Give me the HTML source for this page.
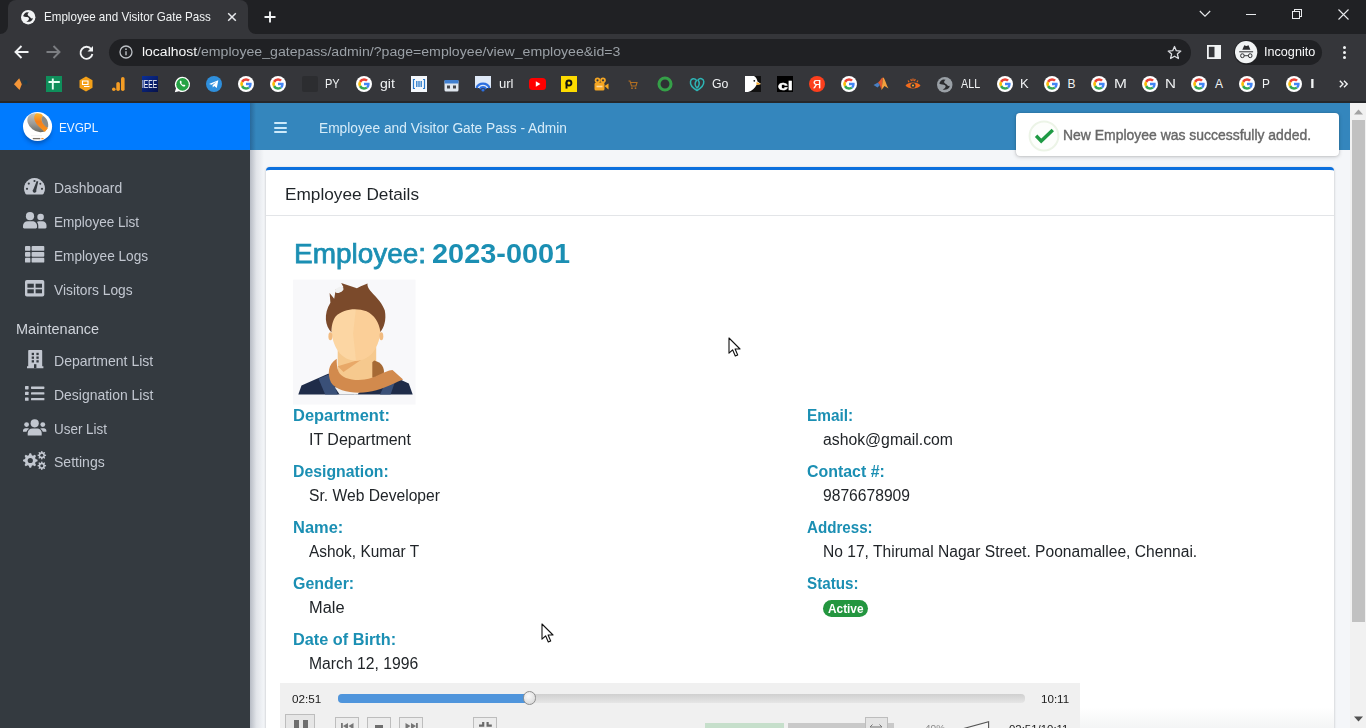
<!DOCTYPE html>
<html lang="en"><head><meta charset="utf-8"><title>Employee and Visitor Gate Pass</title>
<style>
html,body{margin:0;padding:0}
body{width:1366px;height:728px;overflow:hidden;position:relative;background:#f4f6f9;font-family:"Liberation Sans",sans-serif}
.b{position:absolute;display:block;overflow:visible}
.t{position:absolute;white-space:nowrap;transform-origin:0 0;display:block}
</style></head>
<body>
<aside>
<div class="b" style="left:0.00px;top:102.50px;width:250.00px;height:626.00px;background:#343a40;"></div>
<div class="b" style="left:0.00px;top:102.50px;width:250.00px;height:47.50px;background:#007bff;"></div>
<svg class="b" style="left:19.90px;top:108.90px;" width="35" height="38" viewBox="0 0 35 38"><defs><linearGradient id="sg" x1="0" y1="0" x2="1" y2="1"><stop offset="0" stop-color="#d2d2d0"/><stop offset=".55" stop-color="#9a9a96"/><stop offset="1" stop-color="#55554f"/></linearGradient><linearGradient id="og" x1="0" y1="0" x2="0" y2="1"><stop offset="0" stop-color="#fbb731"/><stop offset=".45" stop-color="#f7801a"/><stop offset="1" stop-color="#f7941e"/></linearGradient><filter id="ls" x="-40%" y="-40%" width="180%" height="190%"><feGaussianBlur stdDeviation="2"/></filter></defs><ellipse cx="17.500" cy="22" rx="13.500" ry="12.500" fill="#002f75" opacity=".5" filter="url(#ls)"/><circle cx="17.550" cy="17.550" r="14.550" fill="#fff"/><ellipse cx="17.500" cy="13.800" rx="11.200" ry="8.200" transform="rotate(38 17.500 13.800)" fill="url(#sg)"/><path d="M15.96 4.58 C12.17 8.37 14.06 14.69 24.81 22.91 L27.97 19.12 C22.28 15.33 19.75 10.90 22.91 6.48 C21.65 4.58 18.49 3.95 15.96 4.58 z" fill="url(#og)"/><path d="M22.91 6.79 C20.38 10.90 22.28 14.69 27.97 18.80 C28.92 14.06 27.02 9.01 22.91 6.79 z" fill="#8b8b87"/><path d="M12.800 29.600H20.300" stroke="#77706a" stroke-width="1.300"/><path d="M21.300 29.600H23.600" stroke="#f0923a" stroke-width="1.300"/><path d="M11 26.700H22" stroke="#e9e9e9" stroke-width=".600"/></svg>
<span class="t" style="left:59.33px;top:120.60px;font-size:13.70px;line-height:13.70px;color:#fff;font-weight:400;transform:scaleX(0.8591);opacity:.92;">EVGPL</span>
<span class="t" style="left:53.80px;top:180.80px;font-size:14.30px;line-height:14.30px;color:#c2c7d0;font-weight:400;transform:scaleX(0.9754);">Dashboard</span>
<span class="t" style="left:53.80px;top:215.00px;font-size:14.30px;line-height:14.30px;color:#c2c7d0;font-weight:400;transform:scaleX(0.9471);">Employee List</span>
<span class="t" style="left:53.80px;top:249.00px;font-size:14.30px;line-height:14.30px;color:#c2c7d0;font-weight:400;transform:scaleX(0.9551);">Employee Logs</span>
<span class="t" style="left:53.80px;top:283.00px;font-size:14.30px;line-height:14.30px;color:#c2c7d0;font-weight:400;transform:scaleX(0.9642);">Visitors Logs</span>
<span class="t" style="left:15.53px;top:321.70px;font-size:14.30px;line-height:14.30px;color:#d0d4db;font-weight:400;transform:scaleX(1.0150);">Maintenance</span>
<span class="t" style="left:53.80px;top:353.90px;font-size:14.30px;line-height:14.30px;color:#c2c7d0;font-weight:400;transform:scaleX(0.9836);">Department List</span>
<span class="t" style="left:53.80px;top:387.80px;font-size:14.30px;line-height:14.30px;color:#c2c7d0;font-weight:400;transform:scaleX(0.9764);">Designation List</span>
<span class="t" style="left:53.80px;top:421.60px;font-size:14.30px;line-height:14.30px;color:#c2c7d0;font-weight:400;transform:scaleX(0.9404);">User List</span>
<span class="t" style="left:53.80px;top:454.80px;font-size:14.30px;line-height:14.30px;color:#c2c7d0;font-weight:400;transform:scaleX(0.9824);">Settings</span>
<svg class="b" style="left:24.00px;top:178.00px;" width="21" height="16.5" viewBox="0 0 21 16.5"><path d="M10.500 0A10.500 10.500 0 0 0 1.400 15.700c.300.500.800.800 1.300.800H18.300c.500 0 1-.300 1.300-.800A10.500 10.500 0 0 0 10.500 0z" fill="#c2c7d0"/><g fill="#343a40"><circle cx="10.500" cy="3" r="1.100"/><circle cx="4.800" cy="5.600" r="1.100"/><circle cx="3" cy="10.800" r="1.100"/><circle cx="18" cy="10.800" r="1.100"/><circle cx="16.300" cy="5.700" r="1"/><path d="M12.700 3L9.400 11.200A1.900 1.900 0 1 0 12.300 12L14.300 3.600z"/></g></svg>
<svg class="b" style="left:23.00px;top:212.00px;" width="23.5" height="16.5" viewBox="0 0 23.5 16.5"><circle cx="7" cy="4.200" r="4.100" fill="#c2c7d0"/><path d="M1.200 16.400C.500 16.400 0 15.900 0 15.200V13.800C0 11.200 2.100 9.300 4.700 9.300H9.300C11.900 9.300 14 11.200 14 13.800V15.200C14 15.900 13.500 16.400 12.800 16.400z" fill="#c2c7d0"/><circle cx="17.600" cy="5" r="3.300" fill="#c2c7d0"/><path d="M15.300 16.400V13.800C15.300 12.200 14.800 10.900 13.900 9.900 14.500 9.500 15.300 9.300 16 9.300H19.400C21.700 9.300 23.500 11 23.500 13.300V15.300C23.500 15.900 23 16.400 22.400 16.400z" fill="#c2c7d0"/></svg>
<svg class="b" style="left:25.00px;top:245.80px;" width="19.4" height="16.8" viewBox="0 0 19.4 16.8"><rect x="0" y="0.00" width="5.400" height="4.800" rx=".900" fill="#c2c7d0"/><rect x="6.600" y="0.00" width="12.700" height="4.800" rx=".900" fill="#c2c7d0"/><rect x="0" y="5.90" width="5.400" height="4.800" rx=".900" fill="#c2c7d0"/><rect x="6.600" y="5.90" width="12.700" height="4.800" rx=".900" fill="#c2c7d0"/><rect x="0" y="11.80" width="5.400" height="4.800" rx=".900" fill="#c2c7d0"/><rect x="6.600" y="11.80" width="12.700" height="4.800" rx=".900" fill="#c2c7d0"/></svg>
<svg class="b" style="left:25.00px;top:280.00px;" width="19.4" height="16.8" viewBox="0 0 19.4 16.8"><rect x="0" y="0" width="19.300" height="16.600" rx="1.800" fill="#c2c7d0"/><g fill="#343a40"><rect x="2.400" y="3.700" width="6.400" height="4"/><rect x="10.600" y="3.700" width="6.400" height="4"/><rect x="2.400" y="9.300" width="6.400" height="4"/><rect x="10.600" y="9.300" width="6.400" height="4"/></g></svg>
<svg class="b" style="left:26.80px;top:349.70px;" width="16.5" height="18.3" viewBox="0 0 16.5 18.3"><path d="M2.200 0H14.200C14.800 0 15.200.400 15.200 1V16.300H16.400V18.200H0V16.300H1.200V1C1.200.400 1.600 0 2.200 0z" fill="#c2c7d0"/><g fill="#343a40"><rect x="4.70" y="2.80" width="2.300" height="2.300"/><rect x="9.40" y="2.80" width="2.300" height="2.300"/><rect x="4.70" y="6.50" width="2.300" height="2.300"/><rect x="9.40" y="6.50" width="2.300" height="2.300"/><rect x="4.70" y="10.20" width="2.300" height="2.300"/><rect x="9.40" y="10.20" width="2.300" height="2.300"/><rect x="7" y="14.200" width="2.400" height="4"/></g></svg>
<svg class="b" style="left:25.00px;top:386.00px;" width="19.5" height="15" viewBox="0 0 19.5 15"><rect x="0" y="0.00" width="3.600" height="3.400" rx=".600" fill="#c2c7d0"/><rect x="6" y="0.50" width="13.400" height="2.400" rx=".600" fill="#c2c7d0"/><rect x="0" y="5.70" width="3.600" height="3.400" rx=".600" fill="#c2c7d0"/><rect x="6" y="6.20" width="13.400" height="2.400" rx=".600" fill="#c2c7d0"/><rect x="0" y="11.40" width="3.600" height="3.400" rx=".600" fill="#c2c7d0"/><rect x="6" y="11.90" width="13.400" height="2.400" rx=".600" fill="#c2c7d0"/></svg>
<svg class="b" style="left:22.90px;top:419.00px;" width="23.4" height="16.5" viewBox="0 0 23.4 16.5"><circle cx="11.700" cy="4.300" r="4.100" fill="#c2c7d0"/><path d="M4.700 16.400V14.200C4.700 11.500 6.800 9.600 9.400 9.600H14C16.600 9.600 18.700 11.500 18.700 14.200V16.400z" fill="#c2c7d0"/><circle cx="3.600" cy="5.600" r="2.400" fill="#c2c7d0"/><circle cx="19.800" cy="5.600" r="2.400" fill="#c2c7d0"/><path d="M0 12.800V11.600C0 10.200 1.100 9.200 2.400 9.200H4.700C5.300 9.200 5.800 9.400 6.200 9.700 4.700 10.600 3.700 12 3.500 12.800z" fill="#c2c7d0"/><path d="M23.400 12.800V11.600C23.400 10.200 22.300 9.200 21 9.200H18.700C18.100 9.200 17.600 9.400 17.200 9.700 18.700 10.600 19.700 12 19.900 12.800z" fill="#c2c7d0"/></svg>
<svg class="b" style="left:22.90px;top:450.80px;" width="23.6" height="19" viewBox="0 0 23.6 19"><path d="M14.56 8.70L14.56 10.30L12.58 11.03L12.12 12.15L13.00 14.06L11.86 15.20L9.95 14.32L8.83 14.78L8.10 16.76L6.50 16.76L5.77 14.78L4.65 14.32L2.74 15.20L1.60 14.06L2.48 12.15L2.02 11.03L0.04 10.30L0.04 8.70L2.02 7.97L2.48 6.85L1.60 4.94L2.74 3.80L4.65 4.68L5.77 4.22L6.50 2.24L8.10 2.24L8.83 4.22L9.95 4.68L11.86 3.80L13.00 4.94L12.12 6.85L12.58 7.97z" fill="#c2c7d0"/><circle cx="7.30" cy="9.50" r="2.60" fill="#343a40"/><path d="M23.07 3.83L23.07 4.77L21.78 5.16L21.52 5.79L22.16 6.99L21.49 7.66L20.29 7.02L19.66 7.28L19.27 8.57L18.33 8.57L17.94 7.28L17.31 7.02L16.11 7.66L15.44 6.99L16.08 5.79L15.82 5.16L14.53 4.77L14.53 3.83L15.82 3.44L16.08 2.81L15.44 1.61L16.11 0.94L17.31 1.58L17.94 1.32L18.33 0.03L19.27 0.03L19.66 1.32L20.29 1.58L21.49 0.94L22.16 1.61L21.52 2.81L21.78 3.44z" fill="#c2c7d0"/><circle cx="18.80" cy="4.30" r="1.50" fill="#343a40"/><path d="M23.07 14.23L23.07 15.17L21.78 15.56L21.52 16.19L22.16 17.39L21.49 18.06L20.29 17.42L19.66 17.68L19.27 18.97L18.33 18.97L17.94 17.68L17.31 17.42L16.11 18.06L15.44 17.39L16.08 16.19L15.82 15.56L14.53 15.17L14.53 14.23L15.82 13.84L16.08 13.21L15.44 12.01L16.11 11.34L17.31 11.98L17.94 11.72L18.33 10.43L19.27 10.43L19.66 11.72L20.29 11.98L21.49 11.34L22.16 12.01L21.52 13.21L21.78 13.84z" fill="#c2c7d0"/><circle cx="18.80" cy="14.70" r="1.50" fill="#343a40"/></svg>
</aside>
<main>
<div class="b" style="left:250.00px;top:102.50px;width:1099.50px;height:626.00px;background:#f4f6f9;"></div>
<div class="b" style="left:250.00px;top:150.00px;width:14.00px;height:578.00px;background:linear-gradient(90deg,rgba(60,70,90,.33),rgba(60,70,90,.10) 45%,rgba(60,70,90,0));"></div>
<div class="b" style="left:250.00px;top:102.50px;width:1099.50px;height:47.30px;background:#3486bd;"></div>
<div class="b" style="left:250.00px;top:102.50px;width:6.00px;height:47.30px;background:linear-gradient(90deg,rgba(20,50,90,.35),rgba(20,50,90,0));"></div>
<div class="b" style="left:274.00px;top:122.10px;width:13.00px;height:2.30px;background:#cdeafb;border-radius:1px;"></div>
<div class="b" style="left:274.00px;top:126.65px;width:13.00px;height:2.30px;background:#cdeafb;border-radius:1px;"></div>
<div class="b" style="left:274.00px;top:131.20px;width:13.00px;height:2.30px;background:#cdeafb;border-radius:1px;"></div>
<span class="t" style="left:318.67px;top:121.35px;font-size:14.00px;line-height:14.00px;color:#d6ecf9;font-weight:400;transform:scaleX(0.9816);">Employee and Visitor Gate Pass - Admin</span>
<div class="b" style="left:266.00px;top:167.00px;width:1068.00px;height:570.00px;background:#fff;border-top:3px solid #0b70de;border-radius:4px 4px 0 0;box-shadow:0 0 1px rgba(0,0,0,.125),0 1px 3px rgba(0,0,0,.2);"></div>
<div class="b" style="left:266.00px;top:214.50px;width:1068.00px;height:1.00px;background:#e3e5e8;"></div>
<span class="t" style="left:285.41px;top:185.67px;font-size:17.40px;line-height:17.40px;color:#1f2428;font-weight:400;transform:scaleX(0.9906);">Employee Details</span>
<span class="t" style="left:293.87px;top:240.24px;font-size:27.60px;line-height:27.60px;color:#1b8fb3;font-weight:400;transform:scaleX(1.0131);-webkit-text-stroke:.75px #1b8fb3;">Employee:</span>
<span class="t" style="left:431.55px;top:240.24px;font-size:27.60px;line-height:27.60px;color:#1b8fb3;font-weight:700;transform:scaleX(1.0472);">2023-0001</span>
<svg class="b" style="left:280.00px;top:270.00px;" width="150" height="140" viewBox="0 0 150 140"><rect x="13.1" y="9.6" width="122.5" height="125.0" fill="#f8f8fa"/><path d="M18.3 124.6 L21.5 115.4 L48.1 103.8 L107.7 103.8 L128.8 113.5 L132.7 124.6 z" fill="#1f2c49"/><path d="M38.5 108.7 L50.4 103.8 L57.7 124.6 L45.2 124.6 z" fill="#3a5078"/><path d="M100.0 124.6 L107.7 107.7 L115.4 110.6 L110.6 124.6 z" fill="#3a5078"/><path d="M55.8 115.4 L92.3 115.4 L75.0 124.6 z" fill="#f3f3f3"/><path d="M54.8 117.3 L80.8 117.3 L77.9 124.6 L59.6 124.6 z" fill="#f3f3f3"/><path d="M57.7 76.9 L96.2 76.9 L96.2 103.8 L90.4 111.5 C80.8 115.4 65.4 113.5 57.7 103.8 z" fill="#f6c98e"/><path d="M94.2 90.4 C101.9 92.3 104.8 98.1 103.8 103.8 L92.3 107.7 L92.3 92.3 z" fill="#a66a35"/><path d="M56.7 88.8 C48.1 94.2 47.1 103.8 51.0 112.5 C57.7 123.1 80.8 125.0 96.2 120.2 C107.7 117.3 117.3 111.5 123.1 109.6 L112.5 100.0 C103.8 101.0 96.2 107.7 84.6 109.6 C73.1 111.5 61.5 107.7 58.7 101.9 C56.7 98.1 56.7 92.3 56.7 88.8 z" fill="#d28a4d"/><path d="M57.7 96.2 L82.7 88.8 L63.5 101.9 z" fill="#e8a868"/><path d="M51.5 57.7 C51.5 42.3 63.5 37.5 76.0 37.5 C90.4 37.5 101.0 43.3 100.4 59.6 C100.0 76.9 90.4 90.4 76.0 90.8 C61.5 90.4 51.5 76.9 51.5 57.7 z" fill="#fcd6a3"/><path d="M76.0 37.5 C90.4 37.5 101.0 43.3 100.4 59.6 C100.0 76.9 90.4 90.4 76.0 90.8 L73.1 63.5 z" fill="#f9ca8f" opacity=".55"/><ellipse cx="50.4" cy="66.3" rx="2" ry="4" fill="#f1bb80"/><ellipse cx="101.3" cy="66.3" rx="2" ry="4" fill="#f1bb80"/><path d="M51.5 62.5 C45.2 55.8 43.3 44.2 50.4 32.7 L49.6 23.1 L54.2 28.8 L55.8 19.2 L63.5 17.3 L61.2 13.1 L76.9 18.3 L80.8 16.3 L87.5 13.5 C86.5 21.2 100.0 26.9 104.8 40.4 C106.7 50.0 103.8 57.7 100.4 61.9 C99.0 51.9 94.2 45.2 86.5 41.3 C76.9 37.5 63.5 38.5 55.8 46.2 C52.3 51.0 51.5 56.7 51.5 62.5 z" fill="#7b4a2b"/><ellipse cx="59.2" cy="19.8" rx="4.5" ry="2.600" fill="#f1f1f1" transform="rotate(-25 59.2 19.8)"/></svg>
<span class="t" style="left:293.10px;top:407.79px;font-size:15.60px;line-height:15.60px;color:#1b8fb3;font-weight:700;transform:scaleX(1.0548);">Department:</span>
<span class="t" style="left:309.00px;top:431.69px;font-size:15.60px;line-height:15.60px;color:#212529;font-weight:400;transform:scaleX(1.0257);">IT Department</span>
<span class="t" style="left:293.10px;top:463.79px;font-size:15.60px;line-height:15.60px;color:#1b8fb3;font-weight:700;transform:scaleX(1.0140);">Designation:</span>
<span class="t" style="left:309.00px;top:487.69px;font-size:15.60px;line-height:15.60px;color:#212529;font-weight:400;transform:scaleX(1.0027);">Sr. Web Developer</span>
<span class="t" style="left:293.10px;top:519.79px;font-size:15.60px;line-height:15.60px;color:#1b8fb3;font-weight:700;transform:scaleX(1.0551);">Name:</span>
<span class="t" style="left:309.00px;top:543.69px;font-size:15.60px;line-height:15.60px;color:#212529;font-weight:400;transform:scaleX(0.9879);">Ashok, Kumar T</span>
<span class="t" style="left:293.10px;top:575.79px;font-size:15.60px;line-height:15.60px;color:#1b8fb3;font-weight:700;transform:scaleX(1.0232);">Gender:</span>
<span class="t" style="left:309.00px;top:599.69px;font-size:15.60px;line-height:15.60px;color:#212529;font-weight:400;transform:scaleX(1.0515);">Male</span>
<span class="t" style="left:293.10px;top:631.79px;font-size:15.60px;line-height:15.60px;color:#1b8fb3;font-weight:700;transform:scaleX(1.0437);">Date of Birth:</span>
<span class="t" style="left:309.00px;top:655.69px;font-size:15.60px;line-height:15.60px;color:#212529;font-weight:400;transform:scaleX(1.0079);">March 12, 1996</span>
<span class="t" style="left:807.00px;top:407.79px;font-size:15.60px;line-height:15.60px;color:#1b8fb3;font-weight:700;transform:scaleX(0.9878);">Email:</span>
<span class="t" style="left:823.00px;top:431.69px;font-size:15.60px;line-height:15.60px;color:#212529;font-weight:400;transform:scaleX(1.0118);">ashok@gmail.com</span>
<span class="t" style="left:807.00px;top:463.79px;font-size:15.60px;line-height:15.60px;color:#1b8fb3;font-weight:700;transform:scaleX(1.0207);">Contact #:</span>
<span class="t" style="left:823.00px;top:487.69px;font-size:15.60px;line-height:15.60px;color:#212529;font-weight:400;transform:scaleX(1.0035);">9876678909</span>
<span class="t" style="left:807.00px;top:519.79px;font-size:15.60px;line-height:15.60px;color:#1b8fb3;font-weight:700;transform:scaleX(0.9712);">Address:</span>
<span class="t" style="left:823.00px;top:543.69px;font-size:15.60px;line-height:15.60px;color:#212529;font-weight:400;transform:scaleX(1.0001);">No 17, Thirumal Nagar Street. Poonamallee, Chennai.</span>
<span class="t" style="left:807.00px;top:575.79px;font-size:15.60px;line-height:15.60px;color:#1b8fb3;font-weight:700;transform:scaleX(0.9748);">Status:</span>
<div class="b" style="left:822.80px;top:599.50px;width:45.50px;height:17.60px;background:#23963f;border-radius:9px;"></div>
<span class="t" style="left:828.06px;top:602.79px;font-size:12.30px;line-height:12.30px;color:#fff;font-weight:700;transform:scaleX(0.9628);">Active</span>
<div class="b" style="left:1015.50px;top:113.00px;width:323.00px;height:43.30px;background:#fff;border-radius:4px;box-shadow:0 0 2px rgba(0,0,0,.18),0 1px 4px rgba(0,0,0,.18);"></div>
<svg class="b" style="left:1028.00px;top:119.50px;" width="32" height="32" viewBox="0 0 32 32"><circle cx="16" cy="16" r="14.400" stroke="#ecf4e7" stroke-width="2" fill="#fdfefc"/><path d="M8.100 15.800L13.200 21 24.800 9.900" stroke="#1e9a44" stroke-width="3.400" fill="none" stroke-linejoin="miter"/></svg>
<span class="t" style="left:1062.65px;top:127.56px;font-size:14.70px;line-height:14.70px;color:#686868;font-weight:400;transform:scaleX(0.9494);-webkit-text-stroke:.4px #686868;">New Employee was successfully added.</span>
<div class="b" style="left:1349.50px;top:102.50px;width:16.50px;height:626.00px;background:#f1f1f1;"></div>
<div class="b" style="left:1351.50px;top:120.00px;width:13.00px;height:501.50px;background:#c1c1c1;"></div>
<svg class="b" style="left:1353.50px;top:109.00px;" width="9" height="6" viewBox="0 0 9 6"><path d="M0 5.500L4.500 .500 9 5.500z" fill="#a3a3a3"/></svg>
<svg class="b" style="left:1353.50px;top:715.50px;" width="9" height="6" viewBox="0 0 9 6"><path d="M0 .500L4.500 5.500 9 .500z" fill="#505050"/></svg>
<div class="b" style="left:280.00px;top:683.00px;width:800.00px;height:45.00px;background:#f0f0f0;"></div>
<div class="b" style="left:1080.00px;top:707.00px;width:254.00px;height:21.00px;background:linear-gradient(180deg,rgba(255,255,255,0),rgba(240,241,242,.75));"></div>
<span class="t" style="left:291.90px;top:693.91px;font-size:11.80px;line-height:11.80px;color:#1a1a1a;font-weight:400;transform:scaleX(0.9930);">02:51</span>
<span class="t" style="left:1040.92px;top:693.91px;font-size:11.80px;line-height:11.80px;color:#1a1a1a;font-weight:400;transform:scaleX(0.9815);">10:11</span>
<div class="b" style="left:338.00px;top:694.00px;width:687.00px;height:8.50px;background:linear-gradient(180deg,#cfcfcf,#e6e6e6);border-radius:4px;"></div>
<div class="b" style="left:338.00px;top:694.00px;width:192.00px;height:8.50px;background:#4f95dc;border-radius:4px;"></div>
<div class="b" style="left:522.50px;top:691.00px;width:13.50px;height:13.50px;background:radial-gradient(circle at 40% 35%,#fafafa,#d2d2d2);border-radius:50%;border:1px solid #8f8f8f;box-sizing:border-box;"></div>
<div class="b" style="left:284.80px;top:714.00px;width:30.20px;height:16.00px;background:#e6e6e6;border:1px solid #bdbdbd;box-sizing:border-box;border-bottom:none;"></div>
<div class="b" style="left:293.70px;top:720.00px;width:5.20px;height:10.00px;background:#6e6e6e;"></div>
<div class="b" style="left:302.60px;top:720.00px;width:5.20px;height:10.00px;background:#6e6e6e;"></div>
<div class="b" style="left:334.80px;top:717.00px;width:24.00px;height:13.00px;background:#ececec;border:1px solid #bdbdbd;box-sizing:border-box;border-bottom:none;"></div>
<div class="b" style="left:367.00px;top:717.00px;width:24.00px;height:13.00px;background:#ececec;border:1px solid #bdbdbd;box-sizing:border-box;border-bottom:none;"></div>
<div class="b" style="left:399.00px;top:717.00px;width:24.00px;height:13.00px;background:#ececec;border:1px solid #bdbdbd;box-sizing:border-box;border-bottom:none;"></div>
<div class="b" style="left:473.20px;top:717.00px;width:24.00px;height:13.00px;background:#ececec;border:1px solid #bdbdbd;box-sizing:border-box;border-bottom:none;"></div>
<svg class="b" style="left:340.50px;top:722.80px;" width="13" height="5" viewBox="0 0 13 5"><path d="M0 0H1.800V5H0zM7 0V5H5L2 3 7 0zM12.500 0V5H10.500L7.500 3z" fill="#777"/></svg>
<div class="b" style="left:374.80px;top:724.50px;width:8.50px;height:4.00px;background:#6e6e6e;"></div>
<svg class="b" style="left:404.50px;top:722.80px;" width="13" height="5" viewBox="0 0 13 5"><path d="M11 0H12.800V5H11zM6 0V5H8L11 3 6 0zM.500 0V5H2.500L5.500 3z" fill="#777"/></svg>
<svg class="b" style="left:478.80px;top:721.80px;" width="13" height="7" viewBox="0 0 13 7"><path d="M4.200 0V3.600H0M8.600 0V3.600H12.800" stroke="#6a6a6a" stroke-width="2.200" fill="none"/></svg>
<div class="b" style="left:705.20px;top:723.00px;width:78.70px;height:6.00px;background:#c6dfcb;"></div>
<div class="b" style="left:788.20px;top:723.00px;width:105.50px;height:6.00px;background:#c9c9c9;"></div>
<div class="b" style="left:864.50px;top:717.00px;width:23.50px;height:13.00px;background:#e4e4e4;border:1px solid #bdbdbd;box-sizing:border-box;border-bottom:none;"></div>
<svg class="b" style="left:870.00px;top:724.00px;" width="12" height="4" viewBox="0 0 12 4"><path d="M0 3H12M2.500 .500L0 3M9.500 .500L12 3" stroke="#777" stroke-width="1" fill="none"/></svg>
<span class="t" style="left:924.74px;top:722.56px;font-size:9.50px;line-height:9.50px;color:#8a8a8a;font-weight:400;transform:scaleX(1.0541);">40%</span>
<svg class="b" style="left:960.00px;top:721.00px;" width="30" height="8" viewBox="0 0 30 8"><path d="M0 8.500L28.600 .800V8.500" stroke="#555" stroke-width="1.100" fill="#f6f6f6"/></svg>
<span class="t" style="left:1008.52px;top:724.31px;font-size:11.80px;line-height:11.80px;color:#1a1a1a;font-weight:400;transform:scaleX(0.9669);">02:51/10:11</span>
<svg class="b" style="left:727.50px;top:337.30px;" width="13" height="21" viewBox="0 0 13 21"><path d="M1 1V16.200L4.600 12.800 7.300 19 9.700 18 7.100 12H12z" fill="#fff" stroke="#111" stroke-width="1.100" stroke-linejoin="round"/></svg>
<svg class="b" style="left:540.50px;top:623.30px;" width="13" height="21" viewBox="0 0 13 21"><path d="M1 1V16.200L4.600 12.800 7.300 19 9.700 18 7.100 12H12z" fill="#fff" stroke="#111" stroke-width="1.100" stroke-linejoin="round"/></svg>
</main>
<header>
<div class="b" style="left:0.00px;top:0.00px;width:1366.00px;height:34.00px;background:#202124;"></div>
<div class="b" style="left:0.00px;top:34.00px;width:1366.00px;height:67.00px;background:#35363a;"></div>
<div class="b" style="left:0.00px;top:101.00px;width:1366.00px;height:1.50px;background:#26272a;"></div>
<div class="b" style="left:8.00px;top:0.00px;width:240.00px;height:34.00px;background:#35363a;border-radius:8px 8px 0 0;"></div>
<svg class="b" style="left:0.00px;top:26.00px;" width="8" height="8" viewBox="0 0 8 8"><path d="M8 0V8H0A8 8 0 0 0 8 0z" fill="#35363a"/></svg>
<svg class="b" style="left:248.00px;top:26.00px;" width="8" height="8" viewBox="0 0 8 8"><path d="M0 0V8H8A8 8 0 0 1 0 0z" fill="#35363a"/></svg>
<svg class="b" style="left:20.80px;top:9.80px;" width="14.4" height="14.4" viewBox="0 0 16 16"><circle cx="8" cy="8" r="8" fill="#f1f3f4"/><path d="M2.4 6.8C2.8 5 4.5 2.900 6.300 2.500L8.900 2.900C8 3.600 7.200 4.600 7.400 5.300C7.700 6.300 8.600 6.700 9.300 7.200C10.300 7.900 11 9.200 11.900 9.400C12.400 9.400 12.800 9 13 8.700C13.100 9.600 13 10.300 12.600 10.900C12 11.800 11.300 12.400 10.400 12.700C9.300 13.100 8.200 13.200 7.100 13.100L5.900 12.600C6.900 12.400 7.700 12 8.200 11.300C8.700 10.700 9 10 8.900 9.400C8.600 8.600 7.900 8.100 7.100 7.900C6.100 7.700 5 7.700 4.100 7.500C3.400 7.400 2.800 7.100 2.400 6.800z" fill="#2b2c2f"/></svg>
<span class="t" style="left:43.64px;top:11.26px;font-size:12.10px;line-height:12.10px;color:#f1f3f4;font-weight:400;transform:scaleX(0.9600);">Employee and Visitor Gate Pass</span>
<svg class="b" style="left:227.00px;top:12.00px;" width="10" height="10" viewBox="0 0 10 10"><path d="M1.2 1.2L8.8 8.800M8.800 1.200L1.200 8.800" stroke="#e8eaed" stroke-width="1.500" fill="none"/></svg>
<svg class="b" style="left:264.00px;top:11.00px;" width="12" height="12" viewBox="0 0 12 12"><path d="M6 .5V11.500M.500 6H11.500" stroke="#f1f3f4" stroke-width="1.900" fill="none"/></svg>
<svg class="b" style="left:1199.00px;top:10.00px;" width="12" height="8" viewBox="0 0 12 8"><path d="M.8 1L6 6.200 11.200 1" stroke="#e8eaed" stroke-width="1.100" fill="none"/></svg>
<div class="b" style="left:1246.00px;top:13.70px;width:10.00px;height:1.10px;background:#e8eaed;"></div>
<svg class="b" style="left:1291.00px;top:8.00px;" width="12" height="12" viewBox="0 0 12 12"><path d="M1.500 3.500H8.500V10.500H1.500zM3.500 3.500V1.500H10.500V8.500H8.500" stroke="#e8eaed" stroke-width="1" fill="none" shape-rendering="crispEdges"/></svg>
<svg class="b" style="left:1337.50px;top:8.50px;" width="11" height="11" viewBox="0 0 11 11"><path d="M.500 .500L10.500 10.500M10.500 .500L.500 10.500" stroke="#e8eaed" stroke-width="1.100" fill="none"/></svg>
<svg class="b" style="left:14.00px;top:45.00px;" width="15" height="14" viewBox="0 0 15 14"><path d="M14.500 7H2M7.500 1L1.500 7 7.500 13" stroke="#f1f3f4" stroke-width="1.900" fill="none"/></svg>
<svg class="b" style="left:46.00px;top:45.00px;" width="15" height="14" viewBox="0 0 15 14"><path d="M.500 7H13M7.500 1L13.500 7 7.500 13" stroke="#7c7e82" stroke-width="1.900" fill="none"/></svg>
<svg class="b" style="left:78.50px;top:44.50px;" width="15" height="15" viewBox="0 0 15 15"><path d="M12.300 4.200A6 6 0 1 0 13.400 9" stroke="#f1f3f4" stroke-width="1.900" fill="none"/><path d="M14 1V6.500H8.500z" fill="#f1f3f4"/></svg>
<div class="b" style="left:109.00px;top:38.50px;width:1082.00px;height:27.00px;background:#202124;border-radius:14px;"></div>
<svg class="b" style="left:119.00px;top:45.00px;" width="14" height="14" viewBox="0 0 14 14"><circle cx="7" cy="7" r="6" stroke="#bdc1c6" stroke-width="1.300" fill="none"/><path d="M7 6.200V10.200" stroke="#bdc1c6" stroke-width="1.400"/><circle cx="7" cy="4.200" r=".85" fill="#bdc1c6"/></svg>
<span class="t" style="left:141.78px;top:45.20px;font-size:13.70px;line-height:13.70px;color:#f8f9fa;font-weight:400;transform:scaleX(1.0208);">localhost</span>
<span class="t" style="left:197.20px;top:45.20px;font-size:13.70px;line-height:13.70px;color:#9aa0a6;font-weight:400;transform:scaleX(1.0322);">/employee_gatepass/admin/?page=employee/view_employee&amp;id=3</span>
<svg class="b" style="left:1166.50px;top:44.50px;" width="15" height="15" viewBox="0 0 15 15"><path d="M7.500 1.500L9.300 5.700 13.800 6.100 10.400 9.100 11.400 13.500 7.500 11.200 3.600 13.500 4.600 9.100 1.200 6.100 5.700 5.700z" stroke="#dadce0" stroke-width="1.300" fill="none" stroke-linejoin="round"/></svg>
<svg class="b" style="left:1207.00px;top:45.00px;" width="14" height="14" viewBox="0 0 14 14"><rect x=".900" y=".900" width="12.200" height="12.200" stroke="#f1f3f4" stroke-width="1.800" fill="none"/><rect x="7.500" y="1" width="5.500" height="12" fill="#f1f3f4"/></svg>
<div class="b" style="left:1234.00px;top:40.00px;width:88.00px;height:24.50px;background:#202124;border-radius:12.500px;"></div>
<svg class="b" style="left:1234.80px;top:40.70px;" width="22.3" height="22.3" viewBox="0 0 22.3 22.3"><circle cx="11.150" cy="11.150" r="11.150" fill="#f1f3f4"/><path d="M7.300 8.850L9.200 4.600C9.300 4.350 9.600 4.300 9.800 4.400L11.400 5.100 13 4.400C13.200 4.300 13.500 4.350 13.600 4.600L15.400 8.850z" fill="#2b2c2f"/><path d="M4.200 10.800H18.100" stroke="#2b2c2f" stroke-width="1"/><rect x="5.700" y="12.800" width="3.400" height="3.800" rx="1.500" stroke="#2b2c2f" stroke-width="1" fill="none"/><rect x="13.500" y="12.800" width="3.400" height="3.800" rx="1.500" stroke="#2b2c2f" stroke-width="1" fill="none"/><path d="M9.100 14.700H13.500" stroke="#2b2c2f" stroke-width=".900"/></svg>
<span class="t" style="left:1264.45px;top:46.14px;font-size:12.00px;line-height:12.00px;color:#f8f9fa;font-weight:400;transform:scaleX(1.0519);">Incognito</span>
<div class="b" style="left:1343.00px;top:45.90px;width:3.20px;height:3.20px;background:#f1f3f4;border-radius:50%;"></div>
<div class="b" style="left:1343.00px;top:50.90px;width:3.20px;height:3.20px;background:#f1f3f4;border-radius:50%;"></div>
<div class="b" style="left:1343.00px;top:55.90px;width:3.20px;height:3.20px;background:#f1f3f4;border-radius:50%;"></div>
<svg class="b" style="left:13.00px;top:76.00px;" width="16" height="16" viewBox="0 0 16 16"><path d="M1 8.300L6.200 2.300 8.800 8.300 6.500 14z" fill="#f59638"/><circle cx="12.300" cy="6.400" r="2.100" fill="#1f3947"/></svg>
<svg class="b" style="left:46.00px;top:76.00px;" width="16" height="16" viewBox="0 0 16 16"><rect width="16" height="16" fill="#0f8f5b"/><path d="M6.800 2.500V13.500M2.500 6H13.800" stroke="#e9fff4" stroke-width="1.900"/></svg>
<svg class="b" style="left:78.00px;top:76.00px;" width="16" height="16" viewBox="0 0 16 16"><path d="M8 .500L14.500 4.200V11.800L8 15.500 1.500 11.800V4.200z" fill="#f4a018"/><path d="M4.500 5H10V8.500H4.500zM6 10.500H11.500" stroke="#fff" stroke-width="1.100" fill="none"/></svg>
<svg class="b" style="left:111.00px;top:76.00px;" width="16" height="16" viewBox="0 0 16 16"><rect x="10" y="1" width="3.600" height="14" rx="1.800" fill="#f59d24"/><rect x="5.300" y="6" width="3.600" height="9" rx="1.800" fill="#f59d24"/><circle cx="2.800" cy="13.200" r="1.800" fill="#f59d24"/></svg>
<div class="b" style="left:142.00px;top:76.00px;width:16.00px;height:16.00px;background:linear-gradient(135deg,#0a2f9a,#07124a);"></div>
<span class="t" style="left:142.36px;top:78.81px;font-size:10.50px;line-height:10.50px;color:#fff;font-weight:400;transform:scaleX(0.6356);">IEEE</span>
<svg class="b" style="left:174.00px;top:76.00px;" width="17" height="17" viewBox="0 0 17 17"><path d="M8.500 .800A7.600 7.600 0 0 0 2 12.300L.800 16.300 5 15.200A7.600 7.600 0 1 0 8.500 .800z" fill="#fff"/><circle cx="8.500" cy="8.400" r="6.300" fill="#25a244"/><path d="M6.200 4.800c-.8.800-.6 2.200.8 3.900 1.600 1.800 3.100 2.300 4 1.500l.4-.9-1.500-.900-.700.600c-.700-.200-1.700-1.200-2-2l.600-.700-.700-1.600z" fill="#fff"/></svg>
<svg class="b" style="left:206.00px;top:76.00px;" width="16" height="16" viewBox="0 0 16 16"><circle cx="8" cy="8" r="8" fill="#2f8fdc"/><path d="M3 8L12.300 4.300 10.800 12 8.200 10.100 6.800 11.500 6.600 9.200 10.500 5.800 5.600 8.800z" fill="#fff"/></svg>
<svg class="b" style="left:238.00px;top:76.00px;" width="16" height="16" viewBox="0 0 16 16"><circle cx="8" cy="8" r="8" fill="#fff"/><g transform="translate(-1.6 -1.6) scale(1.2)"><path d="M8 3.2A4.8 4.8 0 0 0 3.85 5.6L5.6 6.9A2.7 2.7 0 0 1 8 5.3c.7 0 1.3.25 1.8.65l1.5-1.5A4.8 4.8 0 0 0 8 3.2z" fill="#ea4335"/><path d="M3.85 5.6A4.8 4.8 0 0 0 3.85 10.4L5.6 9.1a2.7 2.7 0 0 1 0-2.2z" fill="#fbbc05"/><path d="M3.85 10.4A4.8 4.8 0 0 0 8 12.8c1.3 0 2.4-.45 3.2-1.2L9.6 10.3c-.45.3-1 .45-1.6.45A2.7 2.7 0 0 1 5.6 9.1z" fill="#34a853"/><path d="M12.7 8c0-.35-.03-.65-.1-.95H8V9h2.65c-.12.55-.45 1-.95 1.3l1.5 1.3c.95-.85 1.5-2.1 1.5-3.6z" fill="#4285f4"/></g></svg>
<svg class="b" style="left:270.00px;top:76.00px;" width="16" height="16" viewBox="0 0 16 16"><circle cx="8" cy="8" r="8" fill="#fff"/><g transform="translate(-1.6 -1.6) scale(1.2)"><path d="M8 3.2A4.8 4.8 0 0 0 3.85 5.6L5.6 6.9A2.7 2.7 0 0 1 8 5.3c.7 0 1.3.25 1.8.65l1.5-1.5A4.8 4.8 0 0 0 8 3.2z" fill="#ea4335"/><path d="M3.85 5.6A4.8 4.8 0 0 0 3.85 10.4L5.6 9.1a2.7 2.7 0 0 1 0-2.2z" fill="#fbbc05"/><path d="M3.85 10.4A4.8 4.8 0 0 0 8 12.8c1.3 0 2.4-.45 3.2-1.2L9.6 10.3c-.45.3-1 .45-1.6.45A2.7 2.7 0 0 1 5.6 9.1z" fill="#34a853"/><path d="M12.7 8c0-.35-.03-.65-.1-.95H8V9h2.65c-.12.55-.45 1-.95 1.3l1.5 1.3c.95-.85 1.5-2.1 1.5-3.6z" fill="#4285f4"/></g></svg>
<div class="b" style="left:302.00px;top:76.00px;width:16.00px;height:16.00px;background:#2c2d30;border-radius:2px;"></div>
<span class="t" style="left:325.08px;top:78.14px;font-size:12.00px;line-height:12.00px;color:#f1f3f4;font-weight:400;transform:scaleX(0.9153);">PY</span>
<svg class="b" style="left:356.00px;top:76.00px;" width="16" height="16" viewBox="0 0 16 16"><circle cx="8" cy="8" r="8" fill="#fff"/><g transform="translate(-1.6 -1.6) scale(1.2)"><path d="M8 3.2A4.8 4.8 0 0 0 3.85 5.6L5.6 6.9A2.7 2.7 0 0 1 8 5.3c.7 0 1.3.25 1.8.65l1.5-1.5A4.8 4.8 0 0 0 8 3.2z" fill="#ea4335"/><path d="M3.85 5.6A4.8 4.8 0 0 0 3.85 10.4L5.6 9.1a2.7 2.7 0 0 1 0-2.2z" fill="#fbbc05"/><path d="M3.85 10.4A4.8 4.8 0 0 0 8 12.8c1.3 0 2.4-.45 3.2-1.2L9.6 10.3c-.45.3-1 .45-1.6.45A2.7 2.7 0 0 1 5.6 9.1z" fill="#34a853"/><path d="M12.7 8c0-.35-.03-.65-.1-.95H8V9h2.65c-.12.55-.45 1-.95 1.3l1.5 1.3c.95-.85 1.5-2.1 1.5-3.6z" fill="#4285f4"/></g></svg>
<span class="t" style="left:379.61px;top:78.14px;font-size:12.00px;line-height:12.00px;color:#f1f3f4;font-weight:400;transform:scaleX(1.1750);">git</span>
<svg class="b" style="left:411.00px;top:76.00px;" width="16" height="16" viewBox="0 0 16 16"><rect width="16" height="16" fill="#f5f8fc"/><path d="M4 3.500H2.500V12.500H4M12 3.500H13.500V12.500H12" stroke="#2a79c9" stroke-width="1.200" fill="none"/><path d="M5.800 5V11M8 5V11M10.200 5V11" stroke="#2a79c9" stroke-width="1.300"/></svg>
<svg class="b" style="left:443.50px;top:77.50px;" width="15" height="14" viewBox="0 0 15 14"><rect x=".500" y="2" width="14" height="11.500" rx="1.500" fill="#dfe6ee"/><rect x=".500" y="2" width="14" height="3.500" fill="#3f7fd0"/><rect x="3" y="7.500" width="3" height="3" fill="#44474c"/><rect x="9" y="7.500" width="3" height="3" fill="#44474c"/></svg>
<svg class="b" style="left:475.00px;top:76.00px;" width="16" height="16" viewBox="0 0 16 16"><rect width="16" height="12" fill="#dfe9f7"/><path d="M1.500 12A7 7 0 0 1 14.500 12" stroke="#2c6fe0" stroke-width="2.200" fill="none"/><path d="M4.800 13A3.600 3.600 0 0 1 11.200 13" stroke="#2c6fe0" stroke-width="2" fill="none"/><circle cx="8" cy="14" r="1.600" fill="#2c6fe0"/></svg>
<span class="t" style="left:498.58px;top:78.14px;font-size:12.00px;line-height:12.00px;color:#f1f3f4;font-weight:400;transform:scaleX(1.0894);">url</span>
<svg class="b" style="left:528.50px;top:78.00px;" width="17" height="12" viewBox="0 0 17 12"><rect width="17" height="12" rx="3.500" fill="#f00"/><path d="M6.800 3.300V8.700L11.400 6z" fill="#fff"/></svg>
<div class="b" style="left:561.00px;top:76.00px;width:16.00px;height:16.00px;background:#fddb00;"></div>
<svg class="b" style="left:561.00px;top:76.00px;" width="16" height="16" viewBox="0 0 16 16"><circle cx="7.900" cy="7" r="2.500" stroke="#111" stroke-width="1.900" fill="none"/><path d="M5.500 6.500V12.600" stroke="#111" stroke-width="1.900"/></svg>
<svg class="b" style="left:593.00px;top:76.00px;" width="16" height="16" viewBox="0 0 16 16"><circle cx="4.500" cy="4.300" r="2.800" fill="#f5a623"/><circle cx="10" cy="4.300" r="2.800" fill="#f5a623"/><rect x="1.500" y="6.500" width="10" height="8" rx="1.500" fill="#f5a623"/><path d="M11.500 10L15.500 7.500V13.500z" fill="#f5a623"/><circle cx="4.500" cy="4.300" r="1.100" fill="#35363a"/><circle cx="10" cy="4.300" r="1.100" fill="#35363a"/><path d="M3.500 10.500H9.500" stroke="#fbd9a0" stroke-width="1.600"/></svg>
<svg class="b" style="left:627.50px;top:79.50px;" width="10" height="10" viewBox="0 0 10 10"><path d="M.500 1H2L3.500 6H8L9 2.500H2.500" stroke="#b26f22" stroke-width="1.100" fill="none"/><circle cx="4" cy="8.200" r=".900" fill="#b26f22"/><circle cx="7.500" cy="8.200" r=".900" fill="#b26f22"/></svg>
<svg class="b" style="left:657.00px;top:76.00px;" width="16" height="16" viewBox="0 0 16 16"><circle cx="8" cy="8" r="6" stroke="#35a048" stroke-width="3.100" fill="#2e3033"/></svg>
<svg class="b" style="left:689.00px;top:76.00px;" width="16" height="16" viewBox="0 0 16 16"><path d="M8 14.500C3 11.500 1 8.500 1.500 5.500 2 2.500 5.500 1.500 7.500 4.500 5.500 7 6 10 8 12 10.500 10 11 6.500 9 4 11 1.500 14.500 2.500 14.800 5.500 15 8.500 13 11.500 8 14.500z" stroke="#2db5b5" stroke-width="1.500" fill="none" stroke-linejoin="round"/></svg>
<span class="t" style="left:712.29px;top:78.14px;font-size:12.00px;line-height:12.00px;color:#f1f3f4;font-weight:400;transform:scaleX(1.0267);">Go</span>
<svg class="b" style="left:745.00px;top:76.00px;" width="16" height="16" viewBox="0 0 16 16"><rect width="16" height="16" fill="#111"/><path d="M0 0H9C11 1 12 3 12.500 5.500L16 8 11.500 9C10 12 7 15 3 16H0z" fill="#fff"/><path d="M11.500 6L16 8 11.500 9z" fill="#f5a623"/><circle cx="9.300" cy="4.800" r=".900" fill="#111"/></svg>
<div class="b" style="left:777.00px;top:76.00px;width:16.00px;height:16.00px;background:#000;"></div>
<span class="t" style="left:777.66px;top:78.63px;font-size:13.20px;line-height:13.20px;color:#fff;font-weight:700;transform:scaleX(1.3400);-webkit-text-stroke:.5px #fff;">cl</span>
<svg class="b" style="left:809.00px;top:76.00px;" width="16" height="16" viewBox="0 0 16 16"><circle cx="8" cy="8" r="8" fill="#fc3f1d"/></svg>
<span class="t" style="left:813.31px;top:78.65px;font-size:11.40px;line-height:11.40px;color:#fff;font-weight:400;transform:scaleX(0.9714);-webkit-text-stroke:.25px #fff;">Я</span>
<svg class="b" style="left:841.00px;top:76.00px;" width="16" height="16" viewBox="0 0 16 16"><circle cx="8" cy="8" r="8" fill="#fff"/><g transform="translate(-1.6 -1.6) scale(1.2)"><path d="M8 3.2A4.8 4.8 0 0 0 3.85 5.6L5.6 6.9A2.7 2.7 0 0 1 8 5.3c.7 0 1.3.25 1.8.65l1.5-1.5A4.8 4.8 0 0 0 8 3.2z" fill="#ea4335"/><path d="M3.85 5.6A4.8 4.8 0 0 0 3.85 10.4L5.6 9.1a2.7 2.7 0 0 1 0-2.2z" fill="#fbbc05"/><path d="M3.85 10.4A4.8 4.8 0 0 0 8 12.8c1.3 0 2.4-.45 3.2-1.2L9.6 10.3c-.45.3-1 .45-1.6.45A2.7 2.7 0 0 1 5.6 9.1z" fill="#34a853"/><path d="M12.7 8c0-.35-.03-.65-.1-.95H8V9h2.65c-.12.55-.45 1-.95 1.3l1.5 1.3c.95-.85 1.5-2.1 1.5-3.6z" fill="#4285f4"/></g></svg>
<svg class="b" style="left:873.00px;top:76.00px;" width="16" height="16" viewBox="0 0 16 16"><path d="M.500 9L5 6.500 7 9 4.500 11.500z" fill="#4a7fc1"/><path d="M5 6.500C7.500 4.500 8.500 1.500 10 1.500L8.500 14C8 12 7 10 7 9z" fill="#e4572e"/><path d="M10 1.500C11.500 1.500 13 8 15.500 12.500L11.500 10 8.500 14z" fill="#f2a03d"/></svg>
<svg class="b" style="left:905.00px;top:76.00px;" width="16" height="16" viewBox="0 0 16 16"><path d="M.500 9.500C3 5.500 13 5.500 15.500 9.500 13 13.500 3 13.500 .500 9.500z" fill="#f26b1d"/><circle cx="8" cy="9.500" r="2.500" fill="#35363a"/><circle cx="8" cy="9.500" r="1" fill="#f7b733"/><path d="M3 4.500L4.200 6.200M5.800 3L6.500 5.200M8 2.500V5M10.200 3L9.500 5.200M13 4.500L11.800 6.200" stroke="#f26b1d" stroke-width="1.100"/></svg>
<svg class="b" style="left:937.00px;top:76.50px;" width="15.5" height="15.5" viewBox="0 0 16 16"><circle cx="8" cy="8" r="8" fill="#9aa0a6"/><path d="M2.4 6.8C2.8 5 4.5 2.900 6.300 2.500L8.900 2.900C8 3.600 7.200 4.600 7.400 5.300C7.700 6.300 8.600 6.700 9.300 7.200C10.300 7.900 11 9.200 11.900 9.400C12.400 9.400 12.800 9 13 8.700C13.100 9.600 13 10.300 12.600 10.900C12 11.800 11.300 12.400 10.400 12.700C9.300 13.100 8.200 13.200 7.100 13.100L5.900 12.600C6.900 12.400 7.700 12 8.200 11.300C8.700 10.700 9 10 8.900 9.400C8.600 8.600 7.900 8.100 7.100 7.900C6.100 7.700 5 7.700 4.100 7.500C3.400 7.400 2.800 7.100 2.400 6.800z" fill="#2b2c2f"/></svg>
<span class="t" style="left:961.00px;top:78.14px;font-size:12.00px;line-height:12.00px;color:#f1f3f4;font-weight:400;transform:scaleX(0.8952);">ALL</span>
<svg class="b" style="left:997.00px;top:76.00px;" width="16" height="16" viewBox="0 0 16 16"><circle cx="8" cy="8" r="8" fill="#fff"/><g transform="translate(-1.6 -1.6) scale(1.2)"><path d="M8 3.2A4.8 4.8 0 0 0 3.85 5.6L5.6 6.9A2.7 2.7 0 0 1 8 5.3c.7 0 1.3.25 1.8.65l1.5-1.5A4.8 4.8 0 0 0 8 3.2z" fill="#ea4335"/><path d="M3.85 5.6A4.8 4.8 0 0 0 3.85 10.4L5.6 9.1a2.7 2.7 0 0 1 0-2.2z" fill="#fbbc05"/><path d="M3.85 10.4A4.8 4.8 0 0 0 8 12.8c1.3 0 2.4-.45 3.2-1.2L9.6 10.3c-.45.3-1 .45-1.6.45A2.7 2.7 0 0 1 5.6 9.1z" fill="#34a853"/><path d="M12.7 8c0-.35-.03-.65-.1-.95H8V9h2.65c-.12.55-.45 1-.95 1.3l1.5 1.3c.95-.85 1.5-2.1 1.5-3.6z" fill="#4285f4"/></g></svg>
<span class="t" style="left:1019.92px;top:78.14px;font-size:12.00px;line-height:12.00px;color:#f1f3f4;font-weight:400;transform:scaleX(1.0815);">K</span>
<svg class="b" style="left:1044.00px;top:76.00px;" width="16" height="16" viewBox="0 0 16 16"><circle cx="8" cy="8" r="8" fill="#fff"/><g transform="translate(-1.6 -1.6) scale(1.2)"><path d="M8 3.2A4.8 4.8 0 0 0 3.85 5.6L5.6 6.9A2.7 2.7 0 0 1 8 5.3c.7 0 1.3.25 1.8.65l1.5-1.5A4.8 4.8 0 0 0 8 3.2z" fill="#ea4335"/><path d="M3.85 5.6A4.8 4.8 0 0 0 3.85 10.4L5.6 9.1a2.7 2.7 0 0 1 0-2.2z" fill="#fbbc05"/><path d="M3.85 10.4A4.8 4.8 0 0 0 8 12.8c1.3 0 2.4-.45 3.2-1.2L9.6 10.3c-.45.3-1 .45-1.6.45A2.7 2.7 0 0 1 5.6 9.1z" fill="#34a853"/><path d="M12.7 8c0-.35-.03-.65-.1-.95H8V9h2.65c-.12.55-.45 1-.95 1.3l1.5 1.3c.95-.85 1.5-2.1 1.5-3.6z" fill="#4285f4"/></g></svg>
<span class="t" style="left:1067.50px;top:78.14px;font-size:12.00px;line-height:12.00px;color:#f1f3f4;font-weight:400;transform:scaleX(1.0000);">B</span>
<svg class="b" style="left:1091.00px;top:76.00px;" width="16" height="16" viewBox="0 0 16 16"><circle cx="8" cy="8" r="8" fill="#fff"/><g transform="translate(-1.6 -1.6) scale(1.2)"><path d="M8 3.2A4.8 4.8 0 0 0 3.85 5.6L5.6 6.9A2.7 2.7 0 0 1 8 5.3c.7 0 1.3.25 1.8.65l1.5-1.5A4.8 4.8 0 0 0 8 3.2z" fill="#ea4335"/><path d="M3.85 5.6A4.8 4.8 0 0 0 3.85 10.4L5.6 9.1a2.7 2.7 0 0 1 0-2.2z" fill="#fbbc05"/><path d="M3.85 10.4A4.8 4.8 0 0 0 8 12.8c1.3 0 2.4-.45 3.2-1.2L9.6 10.3c-.45.3-1 .45-1.6.45A2.7 2.7 0 0 1 5.6 9.1z" fill="#34a853"/><path d="M12.7 8c0-.35-.03-.65-.1-.95H8V9h2.65c-.12.55-.45 1-.95 1.3l1.5 1.3c.95-.85 1.5-2.1 1.5-3.6z" fill="#4285f4"/></g></svg>
<span class="t" style="left:1114.11px;top:78.14px;font-size:12.00px;line-height:12.00px;color:#f1f3f4;font-weight:400;transform:scaleX(1.2875);">M</span>
<svg class="b" style="left:1142.00px;top:76.00px;" width="16" height="16" viewBox="0 0 16 16"><circle cx="8" cy="8" r="8" fill="#fff"/><g transform="translate(-1.6 -1.6) scale(1.2)"><path d="M8 3.2A4.8 4.8 0 0 0 3.85 5.6L5.6 6.9A2.7 2.7 0 0 1 8 5.3c.7 0 1.3.25 1.8.65l1.5-1.5A4.8 4.8 0 0 0 8 3.2z" fill="#ea4335"/><path d="M3.85 5.6A4.8 4.8 0 0 0 3.85 10.4L5.6 9.1a2.7 2.7 0 0 1 0-2.2z" fill="#fbbc05"/><path d="M3.85 10.4A4.8 4.8 0 0 0 8 12.8c1.3 0 2.4-.45 3.2-1.2L9.6 10.3c-.45.3-1 .45-1.6.45A2.7 2.7 0 0 1 5.6 9.1z" fill="#34a853"/><path d="M12.7 8c0-.35-.03-.65-.1-.95H8V9h2.65c-.12.55-.45 1-.95 1.3l1.5 1.3c.95-.85 1.5-2.1 1.5-3.6z" fill="#4285f4"/></g></svg>
<span class="t" style="left:1165.14px;top:78.14px;font-size:12.00px;line-height:12.00px;color:#f1f3f4;font-weight:400;transform:scaleX(1.2593);">N</span>
<svg class="b" style="left:1191.00px;top:76.00px;" width="16" height="16" viewBox="0 0 16 16"><circle cx="8" cy="8" r="8" fill="#fff"/><g transform="translate(-1.6 -1.6) scale(1.2)"><path d="M8 3.2A4.8 4.8 0 0 0 3.85 5.6L5.6 6.9A2.7 2.7 0 0 1 8 5.3c.7 0 1.3.25 1.8.65l1.5-1.5A4.8 4.8 0 0 0 8 3.2z" fill="#ea4335"/><path d="M3.85 5.6A4.8 4.8 0 0 0 3.85 10.4L5.6 9.1a2.7 2.7 0 0 1 0-2.2z" fill="#fbbc05"/><path d="M3.85 10.4A4.8 4.8 0 0 0 8 12.8c1.3 0 2.4-.45 3.2-1.2L9.6 10.3c-.45.3-1 .45-1.6.45A2.7 2.7 0 0 1 5.6 9.1z" fill="#34a853"/><path d="M12.7 8c0-.35-.03-.65-.1-.95H8V9h2.65c-.12.55-.45 1-.95 1.3l1.5 1.3c.95-.85 1.5-2.1 1.5-3.6z" fill="#4285f4"/></g></svg>
<span class="t" style="left:1215.00px;top:78.14px;font-size:12.00px;line-height:12.00px;color:#f1f3f4;font-weight:400;transform:scaleX(1.0000);">A</span>
<svg class="b" style="left:1239.00px;top:76.00px;" width="16" height="16" viewBox="0 0 16 16"><circle cx="8" cy="8" r="8" fill="#fff"/><g transform="translate(-1.6 -1.6) scale(1.2)"><path d="M8 3.2A4.8 4.8 0 0 0 3.85 5.6L5.6 6.9A2.7 2.7 0 0 1 8 5.3c.7 0 1.3.25 1.8.65l1.5-1.5A4.8 4.8 0 0 0 8 3.2z" fill="#ea4335"/><path d="M3.85 5.6A4.8 4.8 0 0 0 3.85 10.4L5.6 9.1a2.7 2.7 0 0 1 0-2.2z" fill="#fbbc05"/><path d="M3.85 10.4A4.8 4.8 0 0 0 8 12.8c1.3 0 2.4-.45 3.2-1.2L9.6 10.3c-.45.3-1 .45-1.6.45A2.7 2.7 0 0 1 5.6 9.1z" fill="#34a853"/><path d="M12.7 8c0-.35-.03-.65-.1-.95H8V9h2.65c-.12.55-.45 1-.95 1.3l1.5 1.3c.95-.85 1.5-2.1 1.5-3.6z" fill="#4285f4"/></g></svg>
<span class="t" style="left:1262.32px;top:78.14px;font-size:12.00px;line-height:12.00px;color:#f1f3f4;font-weight:400;transform:scaleX(0.9846);">P</span>
<svg class="b" style="left:1286.30px;top:76.00px;" width="16" height="16" viewBox="0 0 16 16"><circle cx="8" cy="8" r="8" fill="#fff"/><g transform="translate(-1.6 -1.6) scale(1.2)"><path d="M8 3.2A4.8 4.8 0 0 0 3.85 5.6L5.6 6.9A2.7 2.7 0 0 1 8 5.3c.7 0 1.3.25 1.8.65l1.5-1.5A4.8 4.8 0 0 0 8 3.2z" fill="#ea4335"/><path d="M3.85 5.6A4.8 4.8 0 0 0 3.85 10.4L5.6 9.1a2.7 2.7 0 0 1 0-2.2z" fill="#fbbc05"/><path d="M3.85 10.4A4.8 4.8 0 0 0 8 12.8c1.3 0 2.4-.45 3.2-1.2L9.6 10.3c-.45.3-1 .45-1.6.45A2.7 2.7 0 0 1 5.6 9.1z" fill="#34a853"/><path d="M12.7 8c0-.35-.03-.65-.1-.95H8V9h2.65c-.12.55-.45 1-.95 1.3l1.5 1.3c.95-.85 1.5-2.1 1.5-3.6z" fill="#4285f4"/></g></svg>
<span class="t" style="left:1308.70px;top:78.14px;font-size:12.00px;line-height:12.00px;color:#f1f3f4;font-weight:400;transform:scaleX(2.0000);">I</span>
<svg class="b" style="left:1339.00px;top:80.00px;" width="9" height="8" viewBox="0 0 9 8"><path d="M.800 .800L4 4 .800 7.200M5 .800L8.200 4 5 7.200" stroke="#f1f3f4" stroke-width="1.400" fill="none"/></svg>
</header>
</body></html>
